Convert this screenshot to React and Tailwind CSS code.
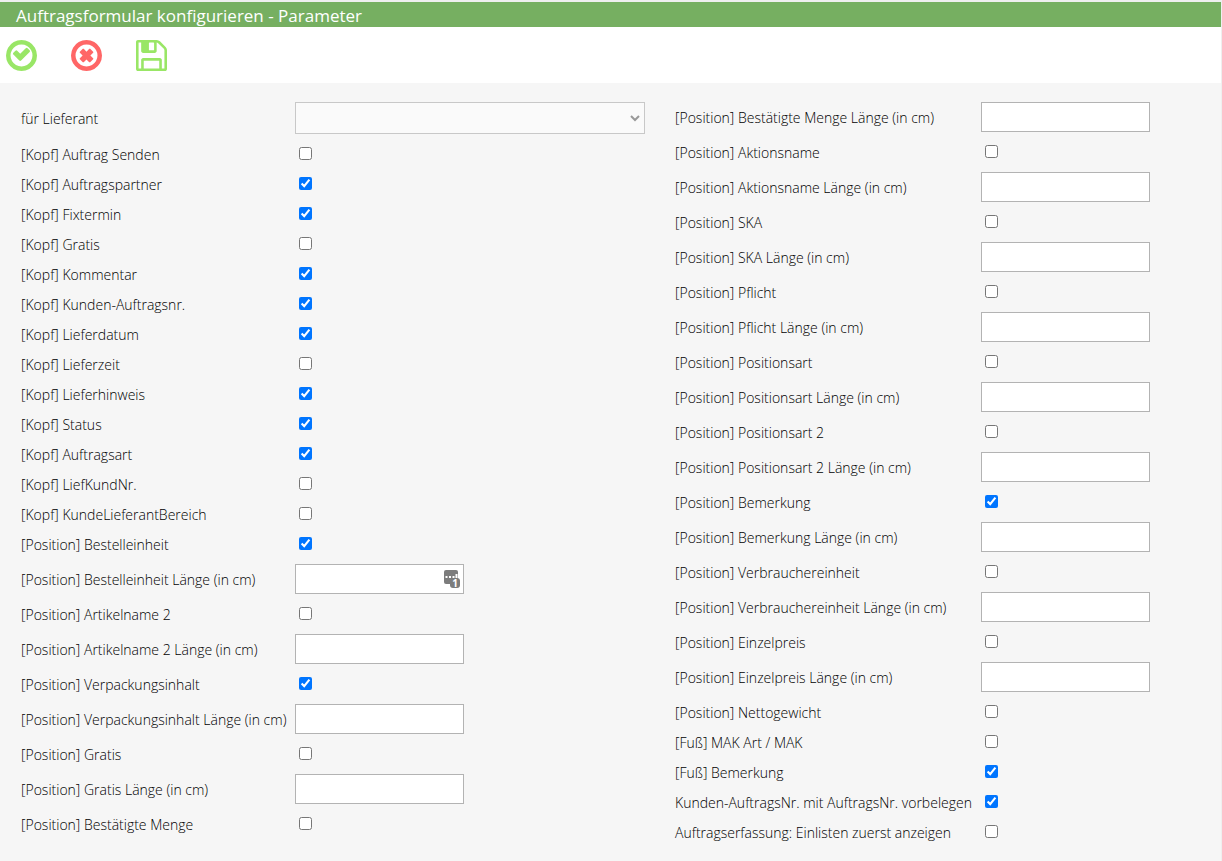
import React from "react";

const leftFields = [
  { id: "lieferant", label: "für Lieferant", type: "select" },
  { id: "k-senden", label: "[Kopf] Auftrag Senden" },
  { id: "k-partner", label: "[Kopf] Auftragspartner", checked: true },
  { id: "k-fixtermin", label: "[Kopf] Fixtermin", checked: true },
  { id: "k-gratis", label: "[Kopf] Gratis" },
  { id: "k-kommentar", label: "[Kopf] Kommentar", checked: true },
  { id: "k-auftragsnr", label: "[Kopf] Kunden-Auftragsnr.", checked: true },
  { id: "k-lieferdatum", label: "[Kopf] Lieferdatum", checked: true },
  { id: "k-lieferzeit", label: "[Kopf] Lieferzeit" },
  { id: "k-lieferhinweis", label: "[Kopf] Lieferhinweis", checked: true },
  { id: "k-status", label: "[Kopf] Status", checked: true },
  { id: "k-auftragsart", label: "[Kopf] Auftragsart", checked: true },
  { id: "k-liefkundnr", label: "[Kopf] LiefKundNr." },
  { id: "k-bereich", label: "[Kopf] KundeLieferantBereich" },
  { id: "p-bestelleinheit", label: "[Position] Bestelleinheit", checked: true },
  { id: "p-bestelleinheit-l", label: "[Position] Bestelleinheit Länge (in cm)", type: "text", badge: true },
  { id: "p-artikelname2", label: "[Position] Artikelname 2" },
  { id: "p-artikelname2-l", label: "[Position] Artikelname 2 Länge (in cm)", type: "text" },
  { id: "p-verpackung", label: "[Position] Verpackungsinhalt", checked: true },
  { id: "p-verpackung-l", label: "[Position] Verpackungsinhalt Länge (in cm)", type: "text" },
  { id: "p-gratis", label: "[Position] Gratis" },
  { id: "p-gratis-l", label: "[Position] Gratis Länge (in cm)", type: "text" },
  { id: "p-menge", label: "[Position] Bestätigte Menge" },
];

const rightFields = [
  { id: "p-menge-l", label: "[Position] Bestätigte Menge Länge (in cm)", type: "text" },
  { id: "p-aktion", label: "[Position] Aktionsname" },
  { id: "p-aktion-l", label: "[Position] Aktionsname Länge (in cm)", type: "text" },
  { id: "p-ska", label: "[Position] SKA" },
  { id: "p-ska-l", label: "[Position] SKA Länge (in cm)", type: "text" },
  { id: "p-pflicht", label: "[Position] Pflicht" },
  { id: "p-pflicht-l", label: "[Position] Pflicht Länge (in cm)", type: "text" },
  { id: "p-art", label: "[Position] Positionsart" },
  { id: "p-art-l", label: "[Position] Positionsart Länge (in cm)", type: "text" },
  { id: "p-art2", label: "[Position] Positionsart 2" },
  { id: "p-art2-l", label: "[Position] Positionsart 2 Länge (in cm)", type: "text" },
  { id: "p-bemerkung", label: "[Position] Bemerkung", checked: true },
  { id: "p-bemerkung-l", label: "[Position] Bemerkung Länge (in cm)", type: "text" },
  { id: "p-verbraucher", label: "[Position] Verbrauchereinheit" },
  { id: "p-verbraucher-l", label: "[Position] Verbrauchereinheit Länge (in cm)", type: "text" },
  { id: "p-einzelpreis", label: "[Position] Einzelpreis" },
  { id: "p-einzelpreis-l", label: "[Position] Einzelpreis Länge (in cm)", type: "text" },
  { id: "p-netto", label: "[Position] Nettogewicht" },
  { id: "f-mak", label: "[Fuß] MAK Art / MAK" },
  { id: "f-bemerkung", label: "[Fuß] Bemerkung", checked: true },
  { id: "vorbelegen", label: "Kunden-AuftragsNr. mit AuftragsNr. vorbelegen", checked: true },
  { id: "einlisten", label: "Auftragserfassung: Einlisten zuerst anzeigen" },
];

const ring =
  "M1312 896q0-148-73-273t-198-198-273-73-273 73-198 198-73 273 73 273 198 198 273 73 273-73 198-198 73-273zm224 0q0 209-103 385.5t-279.5 279.5-385.5 103-385.5-103-279.5-279.5-103-385.5 103-385.5 279.5-279.5 385.5-103 385.5 103 279.5 279.5 103 385.5z";

const actions = [
  {
    title: "Übernehmen",
    color: "text-[#99e666]",
    path: "M1171 723l-422 422q-19 19-45 19t-45-19l-294-294q-19-19-19-45t19-45l102-102q19-19 45-19t45 19l147 147 275-275q19-19 45-19t45 19l102 102q19 19 19 45t-19 45z" + ring,
  },
  {
    title: "Abbrechen",
    color: "text-[#ff6666]",
    path: "M1097 1079l-146 146q-10 10-23 10t-23-10l-137-137-137 137q-10 10-23 10t-23-10l-146-146q-10-10-10-23t10-23l137-137-137-137q-10-10-10-23t10-23l146-146q10-10 23-10t23 10l137 137 137-137q10-10 23-10t23 10l146 146q10 10 10 23t-10 23l-137 137 137 137q10 10 10 23t-10 23z" + ring,
  },
  {
    title: "Speichern",
    color: "text-[#99e666]",
    path: "M384 1536h768v-384h-768v384zm896 0h128v-896q0-14-10-38.5t-20-34.5l-281-281q-10-10-34-20t-39-10v416q0 40-28 68t-68 28h-576q-40 0-68-28t-28-68v-416h-128v1280h128v-416q0-40 28-68t68-28h832q40 0 68 28t28 68v416zm-384-928v-320q0-13-9.5-22.5t-22.5-9.5h-192q-13 0-22.5 9.5t-9.5 22.5v320q0 13 9.5 22.5t22.5 9.5h192q13 0 22.5-9.5t9.5-22.5zm640 32v928q0 40-28 68t-68 28h-1344q-40 0-68-28t-28-68v-1344q0-40 28-68t68-28h928q40 0 88 20t76 48l280 280q28 28 48 76t20 88z",
  },
];

const PasswordBadge = () => (
  <span className="absolute right-1 top-1/2 -translate-y-1/2 text-[10px] leading-none font-bold text-white">
    <svg width="16" height="18" viewBox="0 0 16 18" className="block">
      <rect width="14" height="14" rx="2" fill="#7c7c7c" />
      <path d="M1.5 7h2M5 7h2M8.500 7h2M12.500 4v4.500" stroke="#fff" strokeWidth="2" />
      <rect x="6" y="8" width="10" height="10" rx="3" fill="#7c7c7c" />
    </svg>
    <span className="absolute right-0 bottom-0 w-[10px] text-center">1</span>
  </span>
);

const Control = ({ field }) => {
  if (field.type === "select") {
    return (
      <div className="relative w-full">
        <select
          id={field.id}
          disabled
          className="block h-8 w-full appearance-none border border-[#c8c8c8] bg-[#fafafa]"
        />
        <svg className="absolute right-[5px] top-3 pointer-events-none" width="10" height="8" viewBox="0 0 10 8" fill="none">
          <path d="M1 2l4 4 4-4" stroke="#999" strokeWidth="2" />
        </svg>
      </div>
    );
  }
  if (field.type === "text") {
    return (
      <div className="relative">
        <input
          id={field.id}
          type="text"
          className="block h-[30px] w-[169px] border border-[#b3b3b3] bg-white px-2"
        />
        {field.badge && <PasswordBadge />}
      </div>
    );
  }
  return <input id={field.id} type="checkbox" defaultChecked={field.checked} className="mb-0.5 ml-1 size-[13px]" />;
};

const rowHeights = {
  select: "h-[42px]",
  text: "h-10",
};

const FieldList = ({ fields, labelWidth }) => (
  <div>
    {fields.map((field) => (
      <div key={field.id} className={`flex items-center ${rowHeights[field.type] || "h-[30px]"}`}>
        <label htmlFor={field.id} className={`mt-0.5 shrink-0 whitespace-nowrap ${labelWidth}`}>
          {field.label}
        </label>
        <Control field={field} />
      </div>
    ))}
  </div>
);

const App = () => {
  return (
    <div className="min-h-screen border-t-2 border-r border-[#efefef] bg-[#f6f6f6] font-['Open_Sans',sans-serif] text-sm font-light text-black">
      <h1 className="h-[25px] bg-[#76af61] pl-4 text-[17px] leading-7 font-normal text-white">
        Auftragsformular konfigurieren - Parameter
      </h1>
      <div className="flex h-14 items-center gap-[34px] bg-white pl-[6px]">
        {actions.map((action) => (
          <button key={action.title} type="button" aria-label={action.title} className={action.color}>
            <svg width="31" height="31" viewBox="0 128 1536 1536" fill="currentColor" className="block">
              <path d={action.path} />
            </svg>
          </button>
        ))}
      </div>
      <form className="grid grid-cols-[624px_1fr] gap-[30px] pt-[14px] pl-[21px]">
        <FieldList fields={leftFields} labelWidth="w-[274px]" />
        <FieldList fields={rightFields} labelWidth="w-[306px]" />
      </form>
    </div>
  );
};

export default App;
